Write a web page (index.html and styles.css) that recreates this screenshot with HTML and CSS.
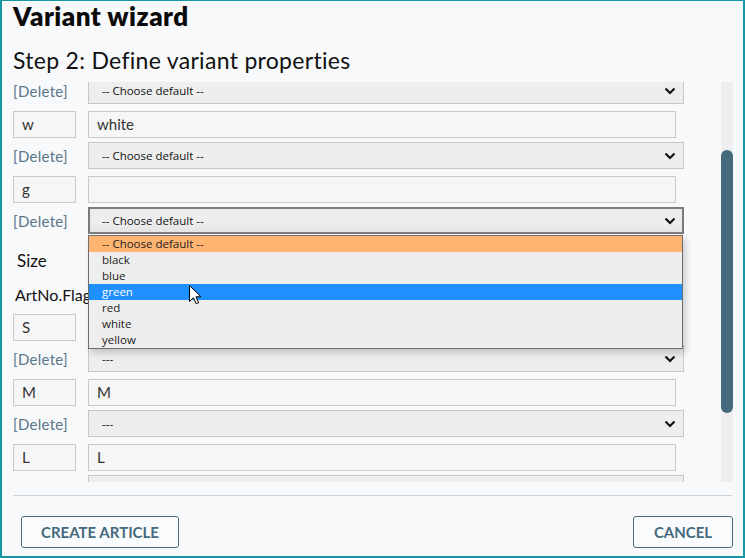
FILE: index.html
```html
<html>
<head>
<meta http-equiv="Content-Type" content="text/html; charset=utf-8">
<title>Variant wizard</title>
<link rel="stylesheet" href="styles.css">
</head>

<body>
<div class="wizard">
	<div class="wizard-head">
		<h1>Variant wizard</h1>
		<h2>Step 2: Define variant properties</h2>
	</div>
	<div class="viewport">
		<div class="props">
			<div class="row sel-row">
				<a class="del" href="#">[Delete]</a>
				<div class="select"><span>-- Choose default --</span><svg class="chev" width="12" height="8" viewBox="0 0 12 8"><path d="M1.5 1.5 L6 6 L10.5 1.5" /></svg></div>
			</div>
			<div class="row val-row">
				<div class="code">w</div>
				<div class="field">white</div>
			</div>
			<div class="row sel-row">
				<a class="del" href="#">[Delete]</a>
				<div class="select"><span>-- Choose default --</span><svg class="chev" width="12" height="8" viewBox="0 0 12 8"><path d="M1.5 1.5 L6 6 L10.5 1.5" /></svg></div>
			</div>
			<div class="row val-row">
				<div class="code">g</div>
				<div class="field"></div>
			</div>
			<div class="row sel-row">
				<a class="del" href="#">[Delete]</a>
				<div class="select focus"><span>-- Choose default --</span><svg class="chev" width="12" height="8" viewBox="0 0 12 8"><path d="M1.5 1.5 L6 6 L10.5 1.5" /></svg>
					<ul class="options">
						<li class="current">-- Choose default --</li>
						<li>black</li>
						<li>blue</li>
						<li class="hover">green</li>
						<li>red</li>
						<li>white</li>
						<li>yellow</li>
					</ul>
				</div>
			</div>

			<div class="group">Size</div>
			<div class="flag">ArtNo.Flags</div>

			<div class="row val-row">
				<div class="code">S</div>
				<div class="field">S</div>
			</div>
			<div class="row sel-row">
				<a class="del" href="#">[Delete]</a>
				<div class="select"><span>---</span><svg class="chev" width="12" height="8" viewBox="0 0 12 8"><path d="M1.5 1.5 L6 6 L10.5 1.5" /></svg></div>
			</div>
			<div class="row val-row">
				<div class="code">M</div>
				<div class="field">M</div>
			</div>
			<div class="row sel-row">
				<a class="del" href="#">[Delete]</a>
				<div class="select"><span>---</span><svg class="chev" width="12" height="8" viewBox="0 0 12 8"><path d="M1.5 1.5 L6 6 L10.5 1.5" /></svg></div>
			</div>
			<div class="row val-row">
				<div class="code">L</div>
				<div class="field">L</div>
			</div>
			<div class="row sel-row">
				<a class="del" href="#">[Delete]</a>
				<div class="select"><span>---</span><svg class="chev" width="12" height="8" viewBox="0 0 12 8"><path d="M1.5 1.5 L6 6 L10.5 1.5" /></svg></div>
			</div>
		</div>
		<div class="scrollbar"><div class="thumb"></div></div>
	</div>
	<div class="wizard-foot">
		<div class="rule"></div>
		<div class="buttons">
			<button class="btn">CREATE ARTICLE</button>
			<button class="btn">CANCEL</button>
		</div>
	</div>
	<!-- mouse pointer over the open list -->
	<svg class="pointer" width="13" height="20" viewBox="0 0 13 20"><path d="M0.5 0.5 L0.5 16.5 L4.5 12.8 L7.2 18.8 L9.6 17.8 L7 11.8 L12 11.8 Z" /></svg>
</div>
</body>
</html>
```

FILE: styles.css
```css
body{
	margin:0;
	font-family:Lato, "Open Sans", sans-serif;
	color:#111;
}
.wizard{
	width:745px;
	height:558px;
	box-sizing:border-box;
	border:2px solid #1497a3;
	border-top-width:1px;
	background:#f8f9fb;
	position:relative;
	overflow:hidden;
	display:flex;
	flex-direction:column;
}
.wizard-head{
	padding-left:11px;
}
.wizard-head h1{
	margin:0;
	font-size:26px;
	line-height:30px;
	font-weight:800;
	letter-spacing:0.5px;
	color:#0b0b0b;
}
.wizard-head h2{
	margin:16px 0 9px;
	font-size:23px;
	line-height:26px;
	font-weight:400;
	letter-spacing:0.3px;
	color:#111;
}

/* scrolled property list */
.viewport{
	height:400px;
	display:flex;
	overflow:hidden;
	flex-shrink:0;
}
.props{
	flex:1;
	padding-left:11px;
	margin-top:-5px;
}
.row{
	display:flex;
	align-items:center;
	gap:12px;
}
.sel-row{
	height:27px;
	margin-bottom:7px;
}
.val-row{
	height:27px;
	margin-bottom:4px;
}
.del{
	width:63px;
	font-size:15px;
	letter-spacing:0.3px;
	color:#5a7689;
	text-decoration:none;
}
.select{
	width:596px;
	height:27px;
	box-sizing:border-box;
	border:1px solid #c6c6c6;
	background:#eeeeee;
	display:flex;
	align-items:center;
	justify-content:space-between;
	padding:0 7px 0 13px;
	font-family:"Open Sans", "Noto Sans", sans-serif;
	font-size:11.5px;
	color:#111;
	position:relative;
}
.select.focus{
	border:2px solid #7b7b7b;
	padding-left:12px;
	padding-right:6px;
	box-shadow:inset 0 -5px 6px rgba(0,0,0,0.04);
	z-index:2;
}
.chev path{
	fill:none;
	stroke:#111;
	stroke-width:2.2;
}
.code, .field{
	height:27px;
	box-sizing:border-box;
	border:1px solid #c9c9c9;
	background:#f6f6f6;
	font-size:15px;
	line-height:25px;
	padding-left:8px;
	color:#333;
}
.code{
	width:63px;
}
.field{
	width:588px;
}
.group{
	margin:17px 0 0 4px;
	font-size:17px;
	line-height:20px;
}
.flag{
	margin:14px 0 9px 2px;
	font-size:16px;
	line-height:20px;
}

/* open option list of the focused select */
.options{
	position:absolute;
	left:-2px;
	top:26px;
	width:595px;
	margin:0;
	padding:0;
	list-style:none;
	box-sizing:border-box;
	border:1px solid #6e6e6e;
	background:#eeeeee;
	box-shadow:3px 4px 7px rgba(0,0,0,0.18);
}
.options li{
	height:16px;
	line-height:16px;
	padding-left:13px;
	font-size:11.5px;
	color:#222;
}
.options li.current{
	background:#ffb570;
}
.options li.hover{
	background:#1e90ff;
	color:#fff;
}

.scrollbar{
	width:12px;
	margin-right:10px;
	background:#eeeeee;
}
.thumb{
	margin-top:68px;
	height:263px;
	background:#456a7d;
	border-radius:6px;
}

.wizard-foot{
	padding-top:13px;
}
.rule{
	height:1px;
	margin:0 11px;
	background:#cdd3d9;
}
.buttons{
	display:flex;
	justify-content:space-between;
	padding:20px 10px 0 19px;
}
.btn{
	height:32px;
	padding:0 19px;
	border:1px solid #456a7d;
	border-radius:3px;
	background:#fafbfc;
	color:#456a7d;
	font-family:Lato, sans-serif;
	font-weight:700;
	font-size:15px;
}
.btn:first-child{
	width:158px;
}
.btn:last-child{
	width:100px;
}
.pointer{
	position:absolute;
	left:187px;
	top:284px;
	z-index:5;
}
.pointer path{
	fill:#fff;
	stroke:#000;
	stroke-width:1;
}
```
